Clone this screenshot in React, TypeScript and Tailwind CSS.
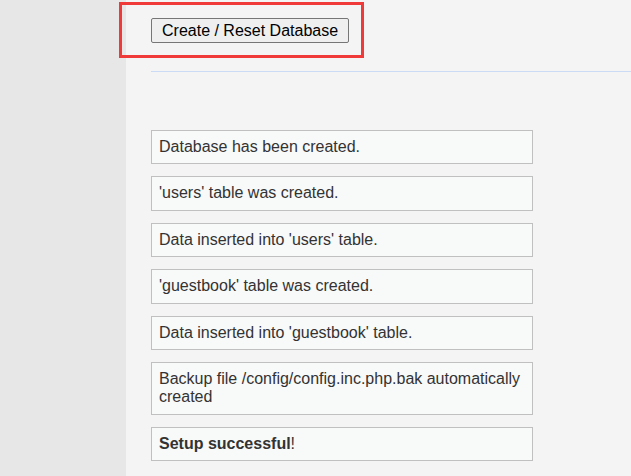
export default function App() {
  const messages: React.ReactNode[] = [
    "Database has been created.",
    "'users' table was created.",
    "Data inserted into 'users' table.",
    "'guestbook' table was created.",
    "Data inserted into 'guestbook' table.",
    "Backup file /config/config.inc.php.bak automatically created",
    <>
      <b>Setup successful</b>!
    </>,
  ]

  return (
    <div className="flex min-h-screen bg-[#f4f4f4] font-['Liberation_Sans',Arial,sans-serif] text-[16px] text-[#333]">
      {/* Left menu column */}
      <div className="w-[126px] shrink-0 bg-[#e7e7e7]" />

      {/* Main body */}
      <div className="flex-1 pl-[25px] pt-[18px]">
        <div className="relative inline-block">
          <button className="h-[25px] px-[10px] rounded-[2px] border border-[#767676] bg-[#efefef] text-[16px] leading-[18px] text-black">
            Create / Reset Database
          </button>
          {/* highlight annotation */}
          <div className="pointer-events-none absolute left-[-32px] top-[-16px] h-[56px] w-[245px] border-[3px] border-[#f03a3a]" />
        </div>

        <hr className="mt-[28px] border-0 border-t border-[#cbdaf5]" />

        <div className="mt-[58px] flex w-[382px] flex-col gap-[12px]">
          {messages.map((m, i) => (
            <div key={i} className="border border-[#c0c0c0] bg-[#f8f9f9] px-[7px] py-[7px] leading-[1.15]">
              {m}
            </div>
          ))}
        </div>
      </div>
    </div>
  )
}
